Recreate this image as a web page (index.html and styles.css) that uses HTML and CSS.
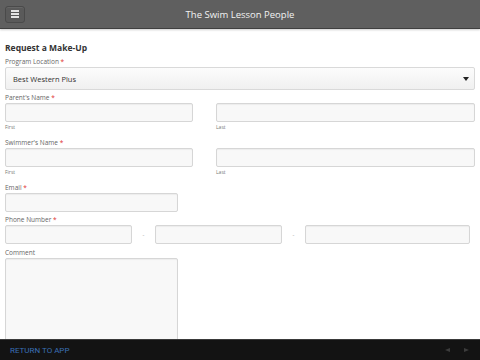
FILE: index.html
```html
<!DOCTYPE html>
<html lang="en">
<head>
    <meta charset="UTF-8">
    <meta name="viewport" content="width=device-width, initial-scale=1.0">
    <title>Request a Make-Up</title>
    <link rel="stylesheet" href="styles.css">
</head>
<body>
<div class="topbar">
    <button class="menu-btn" aria-label="Menu">
        <span></span><span></span><span></span>
    </button>
    <div class="topbar-title">The Swim Lesson People</div>
</div>

<div class="container">
    <h1>Request a Make-Up</h1>

    <!-- Location -->
    <div class="field">
        <label>Program Location <span class="req">*</span></label>
        <div class="select">
            <span>Best Western Plus</span>
            <i class="caret"></i>
        </div>
    </div>

    <!-- Names -->
    <div class="field">
        <label>Parent's Name <span class="req">*</span></label>
        <div class="name-row">
            <div>
                <input type="text" class="input">
                <div class="sub">First</div>
            </div>
            <div>
                <input type="text" class="input">
                <div class="sub">Last</div>
            </div>
        </div>
    </div>
    <div class="field">
        <label>Swimmer's Name <span class="req">*</span></label>
        <div class="name-row">
            <div>
                <input type="text" class="input">
                <div class="sub">First</div>
            </div>
            <div>
                <input type="text" class="input">
                <div class="sub">Last</div>
            </div>
        </div>
    </div>

    <div class="field">
        <label>Email <span class="req">*</span></label>
        <input type="text" class="input short">
    </div>

    <div class="field phone">
        <label>Phone Number <span class="req">*</span></label>
        <div class="phone-row">
            <input type="text" class="input">
            <span class="dash">-</span>
            <input type="text" class="input">
            <span class="dash">-</span>
            <input type="text" class="input">
        </div>
    </div>

    <div class="field">
        <label>Comment</label>
        <textarea class="input short comment"></textarea>
    </div>
</div>

<div class="bottombar">
    <a class="return-link" href="#">RETURN TO APP</a>
    <div class="nav-arrows">
        <i class="arrow-left"></i>
        <i class="arrow-right"></i>
    </div>
</div>
</body>
</html>
```

FILE: styles.css
```css
body {
    font-family: "Open Sans", Arial, sans-serif;
    background-color: #fff;
    margin: 0;
    padding: 0;
}
.topbar {
    height: 28px;
    background-color: #5f5f5f;
    border-bottom: 1px solid #3f3f3f;
    box-shadow: 0 1px 2px rgba(0, 0, 0, 0.2);
    display: flex;
    align-items: center;
    position: relative;
}
.menu-btn {
    width: 20px;
    height: 17px;
    margin-left: 5px;
    padding: 0;
    background-color: #5a5a5a;
    border: 1px solid #4a4a4a;
    border-radius: 3px;
    display: flex;
    flex-direction: column;
    align-items: center;
    justify-content: center;
    gap: 1px;
    box-shadow: inset 0 1px 0 rgba(255, 255, 255, 0.08);
}
.menu-btn span {
    display: block;
    width: 8px;
    height: 2px;
    background-color: #e6e6e6;
}
.topbar-title {
    position: absolute;
    left: 0;
    right: 0;
    text-align: center;
    color: #f2f2f2;
    font-size: 9.5px;
    pointer-events: none;
}
.container {
    padding: 12px 5px 40px 5px;
}
h1 {
    font-size: 8.5px;
    font-weight: bold;
    color: #333;
    margin: 0 0 2px 0;
    line-height: 14px;
}
.field {
    margin-bottom: 3px;
}
.field.phone {
    margin-bottom: 4px;
}
.field label {
    display: block;
    font-size: 6.5px;
    line-height: 10px;
    color: #666;
}
.req {
    color: #e03030;
}
.select {
    height: 21px;
    border: 1px solid #d9d9d9;
    border-radius: 2px;
    background: linear-gradient(#fcfcfc, #f0f0f0);
    display: flex;
    align-items: center;
    justify-content: space-between;
    padding: 0 5px 0 7px;
    font-size: 7.5px;
    color: #333;
}
.caret {
    width: 0;
    height: 0;
    border-left: 3.5px solid transparent;
    border-right: 3.5px solid transparent;
    border-top: 4px solid #222;
    margin-top: 1px;
}
.input {
    display: block;
    box-sizing: border-box;
    width: 100%;
    height: 19px;
    margin: 0;
    border: 1px solid #d6d6d6;
    border-radius: 2px;
    background-color: #f8f8f8;
    box-shadow: inset 0 1px 1px rgba(0, 0, 0, 0.05);
    font-family: inherit;
}
.input.short {
    width: 173px;
}
.name-row {
    display: grid;
    grid-template-columns: 188px 1fr;
    column-gap: 23px;
}
.sub {
    font-size: 5px;
    line-height: 10px;
    color: #777;
    margin-bottom: 3px;
}
.phone-row {
    display: grid;
    grid-template-columns: 127px 23px 127px 23px 165px;
    align-items: center;
}
.dash {
    text-align: center;
    font-size: 6px;
    color: #999;
}
.comment {
    height: 90px;
    resize: none;
}
.bottombar {
    position: fixed;
    left: 0;
    right: 0;
    bottom: 0;
    height: 20px;
    background-color: #131313;
    border-top: 1px solid #3a3a3a;
    display: flex;
    align-items: center;
    justify-content: space-between;
    padding: 0 10px;
}
.return-link {
    color: #3a6fb5;
    font-family: Roboto, Arial, sans-serif;
    font-size: 8px;
    text-decoration: none;
}
.nav-arrows {
    display: flex;
    gap: 14px;
    margin-right: 1px;
}
.arrow-left, .arrow-right {
    width: 0;
    height: 0;
    border-top: 2.5px solid transparent;
    border-bottom: 2.5px solid transparent;
}
.arrow-left {
    border-right: 5px solid #3c3c3c;
}
.arrow-right {
    border-left: 5px solid #3c3c3c;
}
```
